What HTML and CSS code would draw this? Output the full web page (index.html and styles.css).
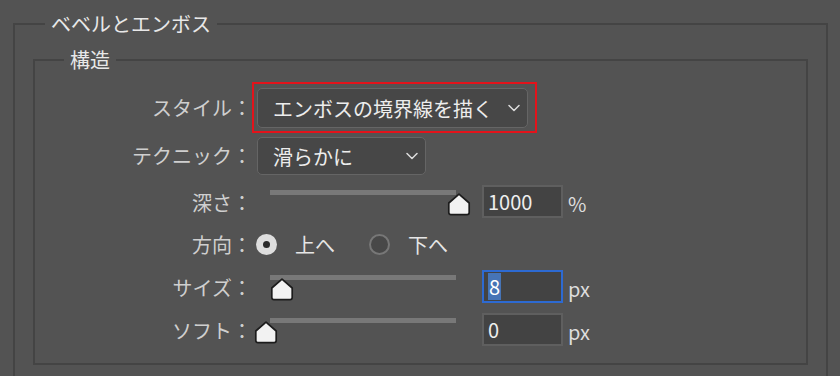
FILE: index.html
```html
<!DOCTYPE html>
<html lang="ja">
<head>
    <meta charset="UTF-8">
    <meta name="viewport" content="width=device-width, initial-scale=1.0">
    <title>ベベルとエンボス</title>
    <link rel="stylesheet" href="styles.css">
</head>
<body>
    <fieldset class="panel">
        <legend class="panel-title">ベベルとエンボス</legend>
        <fieldset class="group">
            <legend class="group-title">構造</legend>

            <div class="row row-style">
                <span class="label">スタイル：</span>
                <div class="highlight">
                    <div class="select select-wide">
                        <span>エンボスの境界線を描く</span>
                        <svg class="chevron" width="12" height="8" viewBox="0 0 12 8"><polyline points="1,1.5 6,6.5 11,1.5"/></svg>
                    </div>
                </div>
            </div>

            <div class="row row-technique">
                <span class="label">テクニック：</span>
                <div class="select select-narrow">
                    <span>滑らかに</span>
                    <svg class="chevron" width="12" height="8" viewBox="0 0 12 8"><polyline points="1,1.5 6,6.5 11,1.5"/></svg>
                </div>
            </div>

            <div class="row row-depth">
                <span class="label">深さ：</span>
                <div class="slider">
                    <div class="track"></div>
                    <svg class="thumb" style="left: 190px" width="24" height="23" viewBox="0 0 24 23"><path d="M12 1.2 L22.2 10 V19.5 Q22.2 21.6 20 21.6 H4 Q1.8 21.6 1.8 19.5 V10 Z"/></svg>
                </div>
                <div class="field">1000</div>
                <span class="unit">%</span>
            </div>

            <div class="row row-direction">
                <span class="label">方向：</span>
                <span class="radio checked"></span>
                <span class="radio-text">上へ</span>
                <span class="radio"></span>
                <span class="radio-text">下へ</span>
            </div>

            <div class="row row-size">
                <span class="label">サイズ：</span>
                <div class="slider">
                    <div class="track"></div>
                    <svg class="thumb" style="left: 13px" width="24" height="23" viewBox="0 0 24 23"><path d="M12 1.2 L22.2 10 V19.5 Q22.2 21.6 20 21.6 H4 Q1.8 21.6 1.8 19.5 V10 Z"/></svg>
                </div>
                <div class="field focused"><span class="selected">8</span></div>
                <span class="unit">px</span>
            </div>

            <div class="row row-soft">
                <span class="label">ソフト：</span>
                <div class="slider">
                    <div class="track"></div>
                    <svg class="thumb" style="left: -3px" width="24" height="23" viewBox="0 0 24 23"><path d="M12 1.2 L22.2 10 V19.5 Q22.2 21.6 20 21.6 H4 Q1.8 21.6 1.8 19.5 V10 Z"/></svg>
                </div>
                <div class="field">0</div>
                <span class="unit">px</span>
            </div>
        </fieldset>
    </fieldset>
</body>
</html>
```

FILE: styles.css
```css
html, body {
    height: 100%;
    overflow: hidden;
}
body {
    margin: 0;
    background-color: #535353;
    font-family: "Noto Sans CJK JP", "Noto Sans", sans-serif;
    color: #e6e6e6;
}
/* 外枠（下端は画面外に続く） */
.panel {
    margin: 14px 12px 0 13px;
    padding: 0 0 11px 0;
    border: 2px solid #444444;
    border-bottom: none;
}
.panel-title {
    margin-left: 30px;
    padding: 0 6px;
    font-size: 20px;
    line-height: 20px;
    color: #e8e8e8;
}
/* 構造 */
.group {
    margin: 16px 18px 0 18px;
    padding: 0 0 17px 0;
    border: 2px solid #444444;
}
.group-title {
    margin-left: 29px;
    padding: 0 6px;
    font-size: 20px;
    line-height: 20px;
    color: #e8e8e8;
}
.row {
    display: flex;
    align-items: center;
}
.row-style { margin-top: 12px; }
.row-technique { margin-top: 4px; }
.row-depth { margin-top: 10px; align-items: flex-start; }
.row-direction { margin-top: 16px; height: 21px; }
.row-size { margin-top: 15px; align-items: flex-start; }
.row-soft { margin-top: 10px; align-items: flex-start; }
.label {
    width: 217px;
    flex-shrink: 0;
    text-align: right;
    font-size: 20px;
    line-height: 20px;
    color: #cfcfcf;
}
.row-depth .label,
.row-size .label,
.row-soft .label {
    margin-top: 8px;
}
/* 赤い枠 */
.highlight {
    border: 2px solid #e3131b;
    padding: 4px 7px 3px 3px;
}
.select {
    box-sizing: border-box;
    display: flex;
    align-items: center;
    justify-content: space-between;
    padding: 0 7px 0 15px;
    border: 1px solid #656565;
    border-radius: 5px;
    background-color: #474747;
    font-size: 20px;
    color: #ededed;
}
.select-wide {
    width: 271px;
    height: 40px;
}
.select-narrow {
    width: 169px;
    height: 38px;
    margin-left: 5px;
}
.chevron polyline {
    fill: none;
    stroke: #dddddd;
    stroke-width: 1.5;
    stroke-linecap: round;
    stroke-linejoin: round;
}
/* スライダー */
.slider {
    position: relative;
    width: 213px;
    height: 33px;
    margin-left: 5px;
}
.track {
    width: 186px;
    height: 5px;
    margin: 5px 0 0 13px;
    background-color: #787878;
}
.thumb {
    position: absolute;
    top: 8px;
}
.thumb path {
    fill: #f2f2f2;
    stroke: #1c1c1c;
    stroke-width: 1.7;
    stroke-linejoin: round;
}
.field {
    box-sizing: border-box;
    display: flex;
    align-items: center;
    width: 81px;
    height: 33px;
    margin-left: 12px;
    padding-left: 4px;
    border: 2px solid #5f5f5f;
    background-color: #434343;
    font-size: 20px;
    color: #eeeeee;
}
.field.focused {
    border-color: #2d6ad2;
}
.selected {
    display: inline-flex;
    align-items: center;
    height: 27px;
    padding: 0 1px;
    background-color: #4674b6;
    color: #ffffff;
}
.unit {
    margin: 4px 0 0 5px;
    font-size: 20px;
    color: #dddddd;
}
/* ラジオボタン */
.radio {
    box-sizing: border-box;
    width: 21px;
    height: 21px;
    border-radius: 50%;
    border: 2px solid #777777;
    background-color: #484848;
    margin-left: 34px;
}
.radio.checked {
    border: none;
    background-color: #dedede;
    margin-left: 4px;
    display: flex;
    align-items: center;
    justify-content: center;
}
.radio.checked::after {
    content: "";
    width: 7px;
    height: 7px;
    border-radius: 50%;
    background-color: #2b2b2b;
}
.radio-text {
    margin-left: 18px;
    font-size: 20px;
    line-height: 20px;
    color: #e6e6e6;
}
```
